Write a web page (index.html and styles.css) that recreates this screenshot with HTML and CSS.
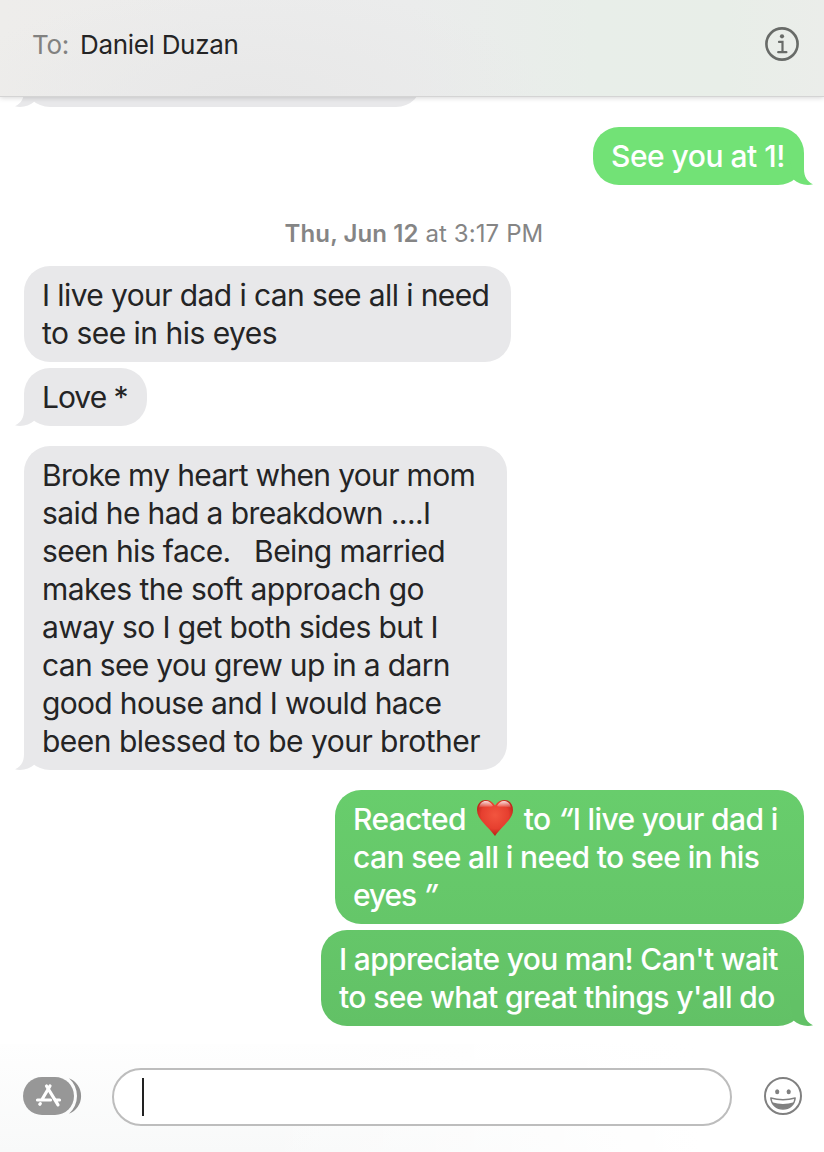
FILE: index.html
```html
<!DOCTYPE html>
<html lang="en">
<head>
    <meta charset="UTF-8">
    <meta name="viewport" content="width=device-width, initial-scale=1.0">
    <title>Messages</title>
    <link rel="stylesheet" href="styles.css">
</head>
<body>
    <!-- Shared tail shape, flipped for sent messages -->
    <svg class="defs" width="0" height="0">
        <symbol id="tail" viewBox="0 0 24 26">
            <path d="M10 0V10C10 18 7 22.5 1 25.3C8 27 15.5 25 20.5 20.5L24 0Z"/>
        </symbol>
    </svg>

    <header class="header">
        <span class="to-label">To:</span>
        <span class="to-name">Daniel Duzan</span>
        <svg class="info-icon" viewBox="0 0 36 36">
            <circle cx="18" cy="18" r="15.6" fill="none" stroke="currentColor" stroke-width="2.6"/>
            <circle cx="18" cy="10.3" r="2.1" fill="currentColor"/>
            <path d="M15 15.9h3.5v10M14.2 26.2h8.2" fill="none" stroke="currentColor" stroke-width="2.2" stroke-linecap="round"/>
        </svg>
    </header>

    <main class="messages">
        <div class="bubble received clipped"><svg class="tail"><use href="#tail"/></svg></div>

        <div class="bubble sent first"><span class="line">See you at 1!</span><svg class="tail"><use href="#tail"/></svg></div>

        <p class="timestamp"><b>Thu, Jun 12</b> at 3:17 PM</p>

        <div class="bubble received live">
            <span class="line">I live your dad i can see all i need</span>
            <span class="line loose">to see in his eyes</span>
        </div>
        <div class="bubble received love">
            <span class="line">Love *</span>
            <svg class="tail"><use href="#tail"/></svg>
        </div>
        <div class="bubble received broke">
            <span class="line tight">Broke my heart when your mom</span>
            <span class="line">said he had a breakdown ....I</span>
            <span class="line">seen his face.&nbsp;&nbsp; Being married</span>
            <span class="line loose">makes the soft approach go</span>
            <span class="line">away so I get both sides but I</span>
            <span class="line tight">can see you grew up in a darn</span>
            <span class="line tight">good house and I would hace</span>
            <span class="line loose">been blessed to be your brother</span>
            <svg class="tail"><use href="#tail"/></svg>
        </div>

        <div class="bubble sent reacted">
            <span class="line">Reacted <svg class="heart" viewBox="0 0 38 38">
                <defs>
                    <radialGradient id="heartFill" cx="50%" cy="42%" r="58%">
                        <stop offset="0" stop-color="#f2553f"/>
                        <stop offset="0.65" stop-color="#e63f2f"/>
                        <stop offset="1" stop-color="#b51f16"/>
                    </radialGradient>
                    <linearGradient id="heartShine" x1="0" y1="0" x2="0" y2="1">
                        <stop offset="0" stop-color="#fff" stop-opacity="0.85"/>
                        <stop offset="1" stop-color="#fff" stop-opacity="0"/>
                    </linearGradient>
                </defs>
                <path d="M19 6.4C16.5 2.6 13 1 9.6 1C4.3 1 1 5.5 1 11C1 20.5 12 27 19 37C26 27 37 20.5 37 11C37 5.5 33.7 1 28.4 1C25 1 21.5 2.6 19 6.4Z" fill="url(#heartFill)"/>
                <path d="M3 9C3.5 4.5 6.5 2 9.8 2C13 2 15.7 4 17 7C13 9 8 6.5 3 9ZM35 9C34.5 4.5 31.5 2 28.2 2C25 2 22.3 4 21 7C25 9 30 6.5 35 9Z" fill="url(#heartShine)"/>
            </svg> to <i>“</i>I live your dad i</span>
            <span class="line">can see all i need to see in his</span>
            <span class="line eyes">eyes <i>”</i></span>
        </div>
        <div class="bubble sent appreciate">
            <span class="line tight">I appreciate you man! Can't wait</span>
            <span class="line">to see what great things y'all do</span>
            <svg class="tail"><use href="#tail"/></svg>
        </div>
    </main>

    <footer class="compose">
        <svg class="apps-icon" viewBox="0 0 60 38">
            <path d="M46 1.3A19 19 0 0 1 46 36.7A23.6 23.6 0 0 0 46 1.3Z" fill="#929292"/>
            <rect width="51" height="38" rx="19" fill="#979797"/>
            <g fill="none" stroke="#fff" stroke-width="3.2" stroke-linecap="round">
                <path d="M27 9L19 22.5M23.5 9L35 27.8M14.5 23h13M33 23h3.5M16.8 27.3l.5-.7"/>
            </g>
        </svg>
        <div class="input"><span class="caret"></span></div>
        <svg class="emoji-icon" viewBox="0 0 38 38">
            <circle cx="19" cy="19" r="18" fill="none" stroke="#808080" stroke-width="2"/>
            <ellipse cx="13.2" cy="14.8" rx="2.1" ry="2.5" fill="#808080"/>
            <ellipse cx="24.7" cy="14.8" rx="2.1" ry="2.5" fill="#808080"/>
            <path d="M6.8 21Q19 24.5 31.2 21C30.7 27.5 25.5 32 19 32S7.3 27.5 6.8 21Z" fill="#fff" stroke="#808080" stroke-width="1.4" stroke-linejoin="round"/>
            <path d="M8 25.3Q19 28.5 30 25.3C27.5 29.7 23.5 32 19 32S10.5 29.7 8 25.3Z" fill="#808080"/>
        </svg>
    </footer>
</body>
</html>
```

FILE: styles.css
```css
* {
    box-sizing: border-box;
}

body {
    margin: 0;
    height: 1152px;
    display: flex;
    flex-direction: column;
    overflow: hidden;
    background: #fff;
    color: #242425;
    font-family: Inter, "Liberation Sans", sans-serif;
}

.defs {
    position: absolute;
}

/* Header */
.header {
    height: 97px;
    flex: none;
    display: flex;
    align-items: center;
    padding: 0 24px 8px 32px;
    font-size: 26px;
    letter-spacing: -0.3px;
    background:
        radial-gradient(ellipse 300px 110px at 250px 100%, #e8e8e8, rgba(232, 232, 232, 0)),
        linear-gradient(90deg, #eeedeb 0%, #ececec 25%, #ebecec 50%, #e8eee9 72%, #e8eee8 88%, #ebedea 100%);
    border-bottom: 1px solid #d4d4d4;
    box-shadow: 0 1px 5px rgba(0, 0, 0, 0.16);
    position: relative;
    z-index: 1;
}
.to-label {
    color: #818180;
    margin-right: 11px;
}
.info-icon {
    width: 36px;
    height: 36px;
    margin-left: auto;
    color: #686b68;
}

/* Conversation */
.messages {
    height: 947px;
    flex: none;
    display: flex;
    flex-direction: column;
    align-items: flex-start;
    padding: 0 20px 0 24px;
}
.bubble {
    position: relative;
    padding: 10px 18px;
    border-radius: 26px;
    font-size: 30px;
    line-height: 38px;
    letter-spacing: -0.6px;
    margin-bottom: 6px;
}
.line {
    display: block;
    white-space: nowrap;
}
.loose {
    letter-spacing: -0.52px;
}
.tight {
    letter-spacing: -0.67px;
}
.received {
    background: #e8e8ea;
    color: #242425;
    fill: #e8e8ea;
}
.sent {
    align-self: flex-end;
    color: #fff;
    font-weight: 500;
    letter-spacing: -0.63px;
}
.tail {
    position: absolute;
    left: -10px;
    bottom: 0;
    width: 24px;
    height: 26px;
}
.sent .tail {
    left: auto;
    right: -10px;
    transform: scaleX(-1);
}

.clipped {
    width: 398px;
    height: 58px;
    margin-top: -48px;
    margin-bottom: 20px;
}
.first {
    width: 211px;
    background: #72e276;
    fill: #72e276;
    margin-bottom: 0;
    letter-spacing: -0.5px;
}
.timestamp {
    align-self: center;
    height: 81px;
    margin: 0;
    padding-top: 33px;
    color: #858585;
    font-size: 24px;
    line-height: 32px;
    letter-spacing: 0.1px;
}
.timestamp b {
    font-weight: 600;
}
.live {
    width: 487px;
}
.love {
    width: 123px;
    margin-bottom: 20px;
    letter-spacing: -1px;
}
.broke {
    width: 483px;
    margin-bottom: 20px;
}
.reacted {
    width: 469px;
    background: linear-gradient(#68cd6c, #65c669);
}
.appreciate {
    width: 483px;
    background: linear-gradient(#65c669, #62c166);
    fill: #62c166;
}
.heart {
    width: 38px;
    height: 38px;
    vertical-align: -8px;
    margin: -8px 2px -8px 3px;
    position: relative;
    top: -9px;
}
.eyes {
    letter-spacing: -1.1px;
}

/* Compose bar */
.compose {
    height: 108px;
    flex: none;
    display: flex;
    align-items: center;
    padding: 0 22px 2px 23px;
    background: linear-gradient(90deg, rgba(255, 255, 255, 0) 30%, #fff 85%), linear-gradient(#fefefe, #f8f9f9);
}
.apps-icon {
    width: 60px;
    height: 38px;
    margin-bottom: 2px;
}
.input {
    width: 620px;
    height: 58px;
    margin-left: 29px;
    padding: 8px 28px;
    border: 2px solid #bdbdbd;
    border-radius: 29px;
    background: #fff;
}
.caret {
    display: block;
    width: 2px;
    height: 38px;
    background: #222;
}
.emoji-icon {
    width: 38px;
    height: 38px;
    margin-left: auto;
    margin-bottom: 2px;
}
```
